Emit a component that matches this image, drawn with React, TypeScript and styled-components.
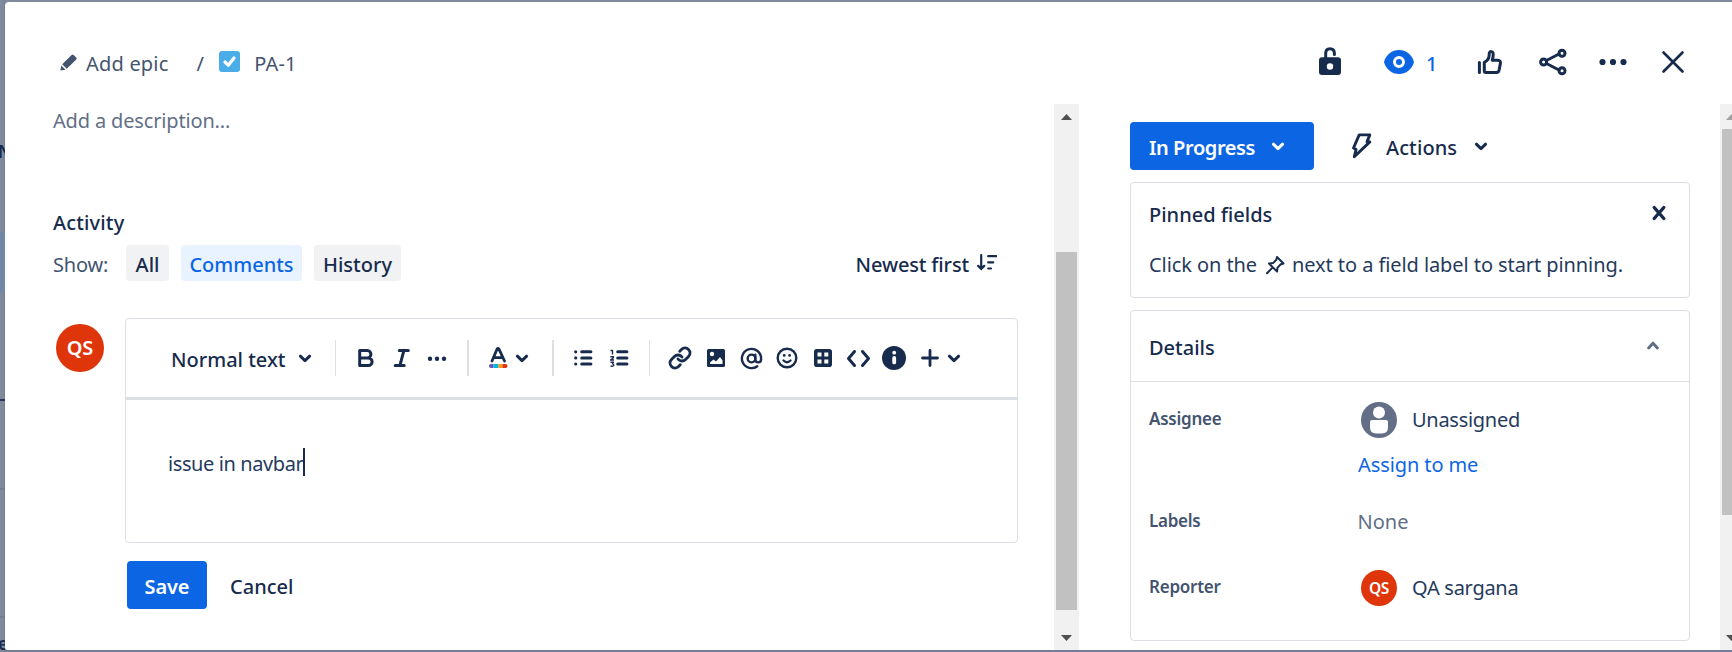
import React from 'react';
import styled, { createGlobalStyle } from 'styled-components';
import { Link, AtSign } from 'lucide-react';

const ink = '#172b4d';
const body = '#253a5c';
const subtle = '#44546f';
const blue = '#0c66e4';
const line = '#dcdfe4';

const GlobalStyle = createGlobalStyle`
  * { box-sizing: border-box; }
  body {
    margin: 0;
    overflow: hidden;
    color: ${ink};
    font: 400 20px/28px 'Noto Sans', 'Open Sans', sans-serif;
    white-space: nowrap;
  }
  svg { display: block; flex: none; }
`;

const Backdrop = styled.div`
  display: grid;
  grid-template: 2px 648px 2px / 5px 1fr;
  width: 1732px;
  height: 652px;
  overflow: hidden;
  background: #7f8a9d;
`;
const BoardEdge = styled.div`
  grid-row: 1 / 4;
  overflow: hidden;
  display: flex;
  flex-direction: column;
  font-size: 17px;
  background: linear-gradient(90deg, transparent 3px, rgba(23, 43, 77, 0.12));
`;
const EdgeLetter = styled.span<{ $before: number }>`
  flex: none;
  margin-top: ${p => p.$before}px;
  margin-left: -2px;
  height: 24px;
  line-height: 24px;
  font-weight: 600;
`;
const EdgeCard = styled.div`
  flex: none;
  margin-top: 68px;
  height: 60px;
  background: #7286a8;
`;
const EdgeRule = styled.div<{ $before: number; $dark?: boolean }>`
  flex: none;
  height: 2px;
  margin-top: ${p => p.$before}px;
  background: ${p => (p.$dark ? '#22375c' : '#727e94')};
`;
const BottomEdge = styled.div`
  grid-area: 3 / 2;
  background: #727e95;
`;
const Modal = styled.main`
  grid-area: 2 / 2;
  display: flex;
  flex-direction: column;
  background: #fff;
  border-radius: 4px 0 0 3px;
  overflow: hidden;
`;

const Header = styled.header`
  flex: none;
  display: flex;
  align-items: center;
  height: 102px;
  padding: 18px 41px 0 55px;
`;
const Crumb = styled.span<{ $before: number }>`
  padding-top: 4px;
  margin-left: ${p => p.$before}px;
  color: ${subtle};
  letter-spacing: 0.2px;
`;
const TaskBadge = styled.span`
  display: grid;
  place-items: center;
  width: 21px;
  height: 21px;
  margin: 0 0 1px 15px;
  border-radius: 3px;
  background: #4bade8;
`;
const HeaderActions = styled.div`
  display: flex;
  align-items: center;
  margin-left: auto;
`;
const Watch = styled.span`
  display: flex;
  align-items: center;
  gap: 9px;
  margin: 0 35px 0 33px;
  color: ${blue};
  span { padding-top: 4px; width: 11px; font-weight: 500; }
`;
const HeaderTrail = styled.span`
  display: flex;
  gap: 28px;
  svg:nth-child(3) { margin-left: -5px; }
  svg:nth-child(4) { margin-left: -4px; }
`;

const Body = styled.div`
  display: flex;
  height: 546px;
`;
const Activity = styled.section`
  width: 1049px;
  padding: 3px 36px 0 48px;
`;
const Placeholder = styled.p`
  margin: 0;
  color: #626f86;
  letter-spacing: -0.16px;
`;
const ActivityTitle = styled.h2`
  margin: 74px 0 8px;
  font-size: 20px;
  font-weight: 500;
  letter-spacing: 0.15px;
`;
const Filters = styled.div`
  display: flex;
  align-items: center;
  height: 36px;
`;
const FilterLabel = styled.span`
  width: 73px;
  padding-top: 4px;
  color: ${subtle};
  letter-spacing: -0.2px;
`;
const Filter = styled.button<{ $w: number; $active?: boolean }>`
  width: ${p => p.$w}px;
  height: 36px;
  margin-right: 12px;
  padding: 4px 0 0;
  border: 0;
  border-radius: 4px;
  font: 500 20px/28px 'Noto Sans', sans-serif;
  color: ${p => (p.$active ? blue : ink)};
  background: ${p => (p.$active ? '#e9f2ff' : '#f1f2f4')};
`;
const Sort = styled.div`
  display: flex;
  gap: 8px;
  margin: 0 21px 0 auto;
  font-weight: 500;
  letter-spacing: -0.15px;
  span { padding-top: 3px; }
  svg { margin-top: 6px; }
`;
const CommentRow = styled.div`
  display: flex;
  align-items: flex-start;
  margin-top: 37px;
`;
const Avatar = styled.span<{ $small?: boolean }>`
  flex: none;
  display: grid;
  place-items: center;
  width: ${p => (p.$small ? 36 : 48)}px;
  height: ${p => (p.$small ? 36 : 48)}px;
  border-radius: 50%;
  background: #de350b;
  color: #fff;
  font-size: ${p => (p.$small ? 15.5 : 20)}px;
  font-weight: 600;
`;
const AvatarSlot = styled.div`
  width: 72px;
  padding: 6px 0 0 3px;
`;
const Editor = styled.div`
  width: 893px;
  height: 225px;
  border: 1px solid ${line};
  border-radius: 4px;
`;
const Toolbar = styled.div`
  display: flex;
  align-items: center;
  height: 81px;
  padding-left: 45px;
  border-bottom: 3px solid ${line};
`;
const StyleName = styled.span`
  width: 116px;
  padding-top: 4px;
  font-weight: 500;
`;
const Divider = styled.i<{ $w?: number; $before?: number; $after?: number }>`
  width: ${p => p.$w ?? 1}px;
  height: 36px;
  margin: 0 ${p => p.$after ?? 12}px 0 ${p => p.$before ?? 12}px;
  background: ${line};
`;
const Tool = styled.svg.attrs({ width: 36, height: 36, viewBox: '0 0 36 36', fill: 'none', stroke: 'currentColor', strokeLinecap: 'round', strokeLinejoin: 'round' })<{ $stroke?: number }>`
  stroke-width: ${p => p.$stroke ?? 3};
`;
const ToolSlot = styled.span<{ $shift?: number }>`
  display: grid;
  place-items: center;
  width: 36px;
  height: 36px;
  padding-right: ${p => p.$shift ?? 0}px;
`;
const Draft = styled.div`
  display: flex;
  padding: 48px 0 0 42px;
  color: ${body};
  letter-spacing: -0.4px;
  span { padding-top: 2px; }
`;
const Caret = styled.i`
  width: 2px;
  height: 28px;
  background: ${ink};
`;
const FormActions = styled.div`
  display: flex;
  align-items: center;
  gap: 23px;
  margin: 18px 0 0 74px;
  font-weight: 500;
  span { padding-top: 4px; }
`;
const PrimaryButton = styled.button<{ $w: number; $menu?: boolean }>`
  display: flex;
  align-items: center;
  justify-content: center;
  gap: 11px;
  width: ${p => p.$w}px;
  height: 48px;
  padding: 0 ${p => (p.$menu ? 5 : 0)}px 0 0;
  border: 0;
  border-radius: 4px;
  background: ${blue};
  color: #fff;
  font: 600 20px/28px 'Noto Sans', sans-serif;
  letter-spacing: ${p => (p.$menu ? -0.4 : -0.1)}px;
  span { padding-top: 4px; }
`;

const ScrollTrack = styled.div<{ $w: number }>`
  flex: none;
  display: flex;
  flex-direction: column;
  width: ${p => p.$w}px;
  overflow: hidden;
  background: #f1f1f1;
`;
const ScrollThumb = styled.div<{ $top: number; $h: number }>`
  flex: none;
  width: 21px;
  height: ${p => p.$h}px;
  margin: ${p => p.$top}px 0 0 2px;
  background: #c1c1c1;
`;
const Arrow = styled.i<{ $down?: boolean; $color: string; $left: number }>`
  flex: none;
  width: 11px;
  height: 6px;
  margin: ${p => (p.$down ? 'auto' : '10px')} 0 ${p => (p.$down ? '9px' : '0')} ${p => p.$left}px;
  background: ${p => p.$color};
  clip-path: ${p => (p.$down ? 'polygon(0 0, 100% 0, 50% 100%)' : 'polygon(0 100%, 100% 100%, 50% 0)')};
`;

const Side = styled.aside`
  width: 641px;
  padding: 18px 30px 0 51px;
`;
const StatusRow = styled.div`
  display: flex;
  align-items: center;
`;
const ActionsMenu = styled.div`
  display: flex;
  align-items: center;
  margin-left: 30px;
  font-weight: 500;
  span { width: 89px; padding: 4px 0 0 6px; letter-spacing: 0.1px; }
`;
const Card = styled.section<{ $h: number }>`
  width: 560px;
  height: ${p => p.$h}px;
  margin-top: 12px;
  border: 1px solid ${line};
  border-radius: 4px;
`;
const PinnedTitle = styled.div`
  display: flex;
  justify-content: space-between;
  padding: 18px 12px 0 18px;
  font-weight: 500;
  svg { margin-top: -6px; }
`;
const PinnedText = styled.div`
  display: flex;
  padding: 20px 0 0 18px;
  letter-spacing: -0.08px;
  color: ${body};
  svg { margin: 3px 6px 0 7px; color: ${ink}; }
`;
const DetailsHeader = styled.div`
  display: flex;
  justify-content: space-between;
  height: 71px;
  padding: 23px 24px 0 18px;
  border-bottom: 1px solid ${line};
  font-weight: 500;
  svg { margin-top: -1px; }
`;
const Field = styled.div<{ $h: number }>`
  display: grid;
  grid-template-columns: 208px 1fr;
  height: ${p => p.$h}px;
  padding-left: 18px;
`;
const FieldName = styled.span<{ $top: number }>`
  padding-top: ${p => p.$top}px;
  font-size: 17px;
  font-weight: 600;
  letter-spacing: -0.25px;
  color: ${subtle};
`;
const Person = styled.div`
  display: flex;
  align-items: center;
  gap: 15px;
  height: 36px;
  padding-left: 4px;
  color: ${body};
  letter-spacing: -0.28px;
`;
const AssignLink = styled.a`
  display: block;
  padding: 13px 0 0 1px;
  color: ${blue};
  letter-spacing: -0.1px;
`;
const NoValue = styled.span`
  padding-top: 3px;
  margin-left: 0.5px;
  color: #626f86;
`;
const FieldList = styled.div`
  padding-top: 20px;
`;
const ChevronIcon = styled.svg<{ $shift?: number }>`
  margin-left: ${p => p.$shift ?? 0}px;
`;

const Chevron = ({ up = false, color = 'currentColor', shift = 0 }) => (
  <ChevronIcon $shift={shift} width="24" height="24" viewBox="0 0 24 24" fill="none" stroke={color} strokeWidth="3" strokeLinecap="round" strokeLinejoin="round">
    <path d={up ? 'M7.6 15l4.4-4.8 4.4 4.8' : 'M7.4 10.2l4.6 4.4 4.6-4.4'} />
  </ChevronIcon>
);

export default function App() {
  return (
    <>
      <GlobalStyle />
      <Backdrop>
        <BoardEdge>
          <EdgeLetter $before={140}>N</EdgeLetter>
          <EdgeCard />
          <EdgeRule $before={107} $dark />
          <EdgeRule $before={87} />
          <EdgeRule $before={126} />
          <EdgeLetter $before={14}>e</EdgeLetter>
        </BoardEdge>
        <Modal>
          <Header>
            <svg width="17" height="17" viewBox="0 0 17 17" fill={subtle}>
              <path d="M.3 16.6l1-5 4.2 4.2zM2.2 10.2L11.6.9q1-.9 2 0l2.6 2.6q.9 1 0 2L6.8 14.8z" />
            </svg>
            <Crumb $before={9}>Add epic</Crumb>
            <Crumb $before={28}>/</Crumb>
            <TaskBadge>
              <svg width="15" height="15" viewBox="0 0 15 15" fill="none" stroke="#fff" strokeWidth="3.2" strokeLinecap="round" strokeLinejoin="round"><path d="M3 8l3.3 3.200L12 4" /></svg>
            </TaskBadge>
            <Crumb $before={14}>PA-1</Crumb>
            <HeaderActions>
              <Tool>
                <path d="M13.7 15V9.6q0-4.8 4.3-4.8t4.4 4.8v.8" />
                <rect x="7" y="13.3" width="22" height="17.7" rx="3" fill="currentColor" stroke="none" />
                <circle cx="18" cy="22.5" r="3.2" fill="#fff" stroke="none" />
              </Tool>
              <Watch>
                <Tool>
                  <path d="M3 18C5 10.500 11 6 18 6s13 4.500 15 12c-2 7.500-8 12-15 12S5 25.500 3 18z" fill="currentColor" stroke="none" />
                  <circle cx="18" cy="18" r="4.5" stroke="#fff" />
                </Tool>
                <span>1</span>
              </Watch>
              <HeaderTrail>
                <Tool>
                  <path d="M7.4 18.5v10" />
                  <path d="M12.3 27V18.4C15 17 17.2 14.6 17.2 11V9.6c0-2.8 3.8-2.6 4 .4.1 2.2-.2 4-1 6.2h5.6c2 0 3 1.4 2.6 3.2l-1.3 6.7c-.4 1.7-1.2 2.4-2.8 2.4H14c-1.100 0-1.700-.6-1.700-1.500z" />
                </Tool>
                <Tool>
                  <path d="M10.500 16.500L23 10M10.500 19.500L23 26" />
                  <circle cx="7.600" cy="18" r="3" /><circle cx="26" cy="9.200" r="3" /><circle cx="26" cy="26.800" r="3" />
                </Tool>
                <Tool>
                  <g fill="currentColor" stroke="none"><circle cx="7.500" cy="18" r="3.100" /><circle cx="18" cy="18" r="3.100" /><circle cx="28.500" cy="18" r="3.100" /></g>
                </Tool>
                <Tool $stroke={2.6}><path d="M8.500 8.500l19 19M27.500 8.500l-19 19" /></Tool>
              </HeaderTrail>
            </HeaderActions>
          </Header>
          <Body>
            <Activity>
              <Placeholder>Add a description...</Placeholder>
              <ActivityTitle>Activity</ActivityTitle>
              <Filters>
                <FilterLabel>Show:</FilterLabel>
                <Filter $w={43}>All</Filter>
                <Filter $w={121} $active>Comments</Filter>
                <Filter $w={87}>History</Filter>
                <Sort>
                  <span>Newest first</span>
                  <svg width="20" height="17" viewBox="0 0 20 17" fill="none" stroke={ink} strokeWidth="2.200" strokeLinecap="round">
                    <path d="M4.200 1.200v12.500M1.200 11.900l3 3 3-3M11.200 2.200h8M11.200 8.400h5M11.200 14.500h2.800" />
                  </svg>
                </Sort>
              </Filters>
              <CommentRow>
                <AvatarSlot><Avatar>QS</Avatar></AvatarSlot>
                <Editor>
                  <Toolbar>
                    <StyleName>Normal text</StyleName>
                    <ToolSlot><Chevron /></ToolSlot>
                    <Divider />
                    <Tool><path d="M11.700 10.500h7.500a3.700 3.700 0 0 1 0 7.400h-7.500zM11.700 17.900h8.600a3.800 3.800 0 0 1 0 7.600h-8.600z" /></Tool>
                    <Tool><path d="M15.300 10.400h9M11.200 25.600h9M19.900 10.400l-4 15.200" /></Tool>
                    <Tool><g fill="currentColor" stroke="none"><circle cx="10" cy="18.700" r="2.200" /><circle cx="17" cy="18.700" r="2.200" /><circle cx="24" cy="18.700" r="2.200" /></g></Tool>
                    <Divider $w={2} $before={11} $after={11} />
                    <Tool $stroke={2.8}>
                      <path d="M12 21L17 9.200q1-1.600 2 0L24.500 21M14 17.700h8.500" />
                      <g stroke="none">
                        <path d="M13.500 24h-2.500a2 2 0 0 0 0 4h2.500z" fill="#6554c0" />
                        <path d="M13.500 24h5v4h-5z" fill="#00b8d9" />
                        <path d="M18.500 24h4v4h-4z" fill="#ff991f" />
                        <path d="M22.500 24h3a2 2 0 0 1 0 4h-3z" fill="#de350b" />
                      </g>
                    </Tool>
                    <Chevron shift={-6} />
                    <Divider $w={2} $before={18} $after={11} />
                    <Tool>
                      <path d="M16.700 11.800h9.200M16.700 17.900h9.200M16.700 24h9.200" />
                      <g fill="currentColor" stroke="none"><circle cx="10.700" cy="11.800" r="1.600" /><circle cx="10.700" cy="17.900" r="1.600" /><circle cx="10.700" cy="24" r="1.600" /></g>
                    </Tool>
                    <Tool>
                      <path d="M16.700 11.800h9.200M16.700 17.900h9.200M16.700 24h9.200" />
                      <path d="M9.500 10.500h2v4M9.300 16.700h3.200v1l-3 2.300h3.500M9.500 22.200h3l-1 1.700q1.500.3 1.200 1.500-.400 1-3.200.9" strokeWidth="1.300" strokeLinecap="butt" style={{ strokeWidth: 1.4 }} />
                    </Tool>
                    <Divider />
                    <ToolSlot><Link size={24} strokeWidth={2.900} /></ToolSlot>
                    <Tool>
                      <rect x="9" y="9" width="18" height="18" rx="1.500" fill="currentColor" stroke="none" />
                      <g fill="#fff" stroke="none"><circle cx="14" cy="14" r="2.200" /><path d="M12 24v-1.500l3.500-3 2.500 2 4-4.500 2.500 3.500V24z" /></g>
                    </Tool>
                    <ToolSlot $shift={2}><AtSign size={23} strokeWidth={2.500} /></ToolSlot>
                    <Tool $stroke={2.4}>
                      <circle cx="17" cy="18" r="9.300" />
                      <path d="M13.500 20.500q3.500 3.300 7 0" />
                      <g fill="currentColor" stroke="none"><circle cx="14.200" cy="15.400" r="1.400" /><circle cx="19.600" cy="15.400" r="1.400" /></g>
                    </Tool>
                    <Tool>
                      <rect x="8" y="9" width="18" height="18" rx="2.800" fill="currentColor" stroke="none" />
                      <path d="M11.500 12.500h4v4h-4zM18.300 12.500h4v4h-4zM11.500 19.500h4v4h-4zM18.300 19.500h4v4h-4z" fill="#fff" stroke="none" />
                    </Tool>
                    <Tool><path d="M12.500 11.500L6.500 18.500l6 7M20.500 11.500l6 7-6 7" /></Tool>
                    <Tool>
                      <circle cx="16" cy="18" r="12" fill="currentColor" stroke="none" />
                      <g fill="#fff" stroke="none"><circle cx="16.200" cy="12.700" r="1.900" /><rect x="14.300" y="16" width="3.800" height="8.300" rx="1.900" /></g>
                    </Tool>
                    <Tool $stroke={2.8}><path d="M8.500 18h15M16 10.500v15" /></Tool>
                    <Chevron shift={-8} />
                  </Toolbar>
                  <Draft><span>issue in navbar</span><Caret /></Draft>
                </Editor>
              </CommentRow>
              <FormActions>
                <PrimaryButton $w={80}><span>Save</span></PrimaryButton>
                <span>Cancel</span>
              </FormActions>
            </Activity>
            <ScrollTrack $w={25}>
              <Arrow $color="#505050" $left={7} />
              <ScrollThumb $top={132} $h={358} />
              <Arrow $down $color="#505050" $left={7} />
            </ScrollTrack>
            <Side>
              <StatusRow>
                <PrimaryButton $w={184} $menu><span>In Progress</span><Chevron /></PrimaryButton>
                <ActionsMenu>
                  <Tool $stroke={2.9}><path d="M15.200 6.900h10.600l-2.800 7h2.800L10.300 28.700l1.800-7.200-2.600-1.500z" /></Tool>
                  <span>Actions</span>
                  <Chevron />
                </ActionsMenu>
              </StatusRow>
              <Card $h={116}>
                <PinnedTitle>
                  Pinned fields
                  <Tool $stroke={3.4}><path d="M13.200 12.500l9.600 11M22.800 12.500l-9.600 11" /></Tool>
                </PinnedTitle>
                <PinnedText>
                  <span>Click on the</span>
                  <svg width="22" height="22" viewBox="0 0 22 22" fill="none" stroke="currentColor" strokeWidth="2" strokeLinecap="round" strokeLinejoin="round">
                    <path d="M13 3l6.500 6.500-2.700.8-3.300 3.300-.4 4L5 9.500l4-.4 3.300-3.300zM8.500 13.600L3 19.200" />
                  </svg>
                  <span>next to a field label to start pinning.</span>
                </PinnedText>
              </Card>
              <Card $h={331}>
                <DetailsHeader>Details<Chevron up color="#626f86" /></DetailsHeader>
                <FieldList>
                  <Field $h={103}>
                    <FieldName $top={3}>Assignee</FieldName>
                    <div>
                      <Person>
                        <svg width="36" height="36" viewBox="0 0 36 36" fill="#fff">
                          <circle cx="18" cy="18" r="18" fill="#626f86" />
                          <circle cx="18" cy="10.500" r="6" />
                          <path d="M9 20q0-2 2-2h14q2 0 2 2v5q0 6.500-6 6.500h-6q-6 0-6-6.500z" />
                        </svg>
                        <span>Unassigned</span>
                      </Person>
                      <AssignLink>Assign to me</AssignLink>
                    </div>
                  </Field>
                  <Field $h={65}>
                    <FieldName $top={2}>Labels</FieldName>
                    <NoValue>None</NoValue>
                  </Field>
                  <Field $h={36}>
                    <FieldName $top={3}>Reporter</FieldName>
                    <Person><Avatar $small>QS</Avatar><span>QA sargana</span></Person>
                  </Field>
                </FieldList>
              </Card>
            </Side>
            <ScrollTrack $w={12}>
              <Arrow $color="#a3a3a3" $left={6} />
              <ScrollThumb $top={9} $h={386} />
              <Arrow $down $color="#505050" $left={6} />
            </ScrollTrack>
          </Body>
        </Modal>
        <BottomEdge />
      </Backdrop>
    </>
  );
}
